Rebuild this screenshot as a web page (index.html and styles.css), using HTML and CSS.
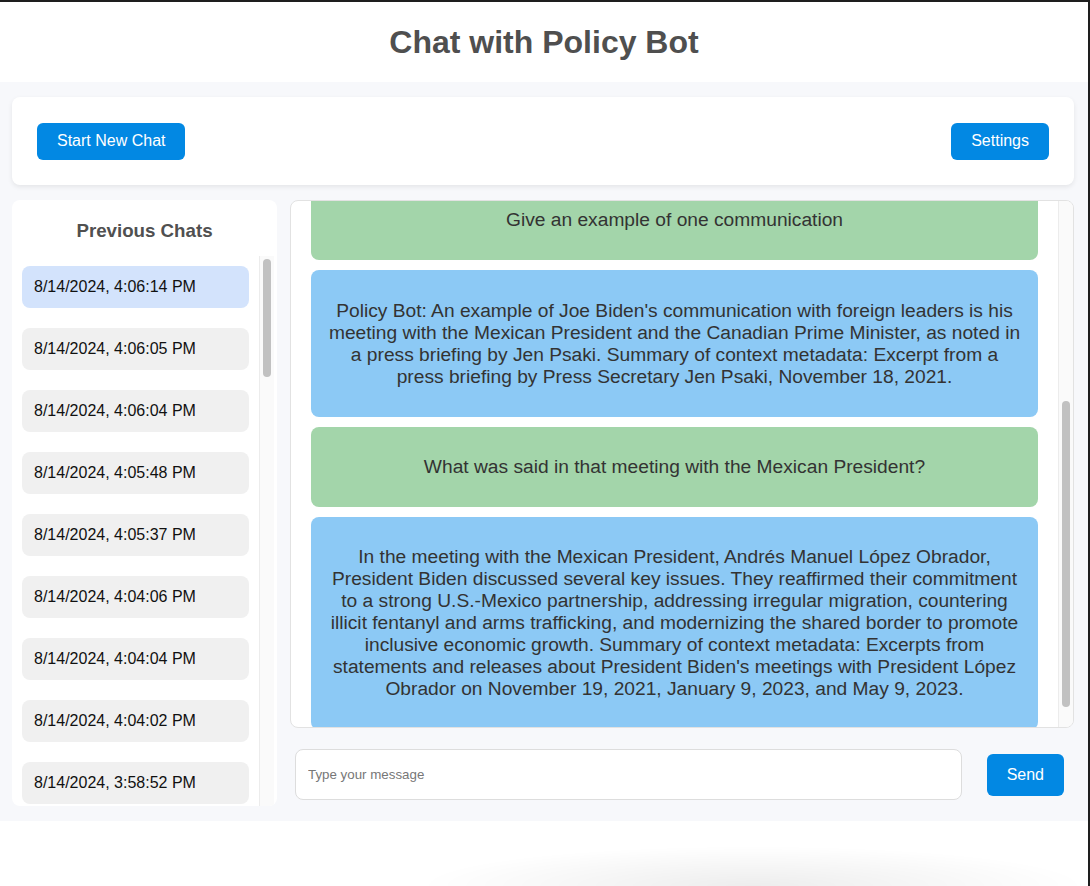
FILE: index.html
```html
<!DOCTYPE html>
<html lang="en">
<head>
<meta charset="utf-8">
<title>Chat with Policy Bot</title>
<link rel="stylesheet" href="styles.css">
</head>
<body>
<div class="frame">
  <header class="app-header">
    <h1 class="app-title">Chat with Policy Bot</h1>
  </header>
  <main class="main">
    <div class="toolbar">
      <button class="btn">Start New Chat</button>
      <button class="btn">Settings</button>
    </div>
    <div class="workspace">
      <aside class="sidebar">
        <h3 class="sidebar-title">Previous Chats</h3>
        <div class="list-wrap">
          <ul class="chat-list">
            <li class="chat-item active">8/14/2024, 4:06:14 PM</li>
            <li class="chat-item">8/14/2024, 4:06:05 PM</li>
            <li class="chat-item">8/14/2024, 4:06:04 PM</li>
            <li class="chat-item">8/14/2024, 4:05:48 PM</li>
            <li class="chat-item">8/14/2024, 4:05:37 PM</li>
            <li class="chat-item">8/14/2024, 4:04:06 PM</li>
            <li class="chat-item">8/14/2024, 4:04:04 PM</li>
            <li class="chat-item">8/14/2024, 4:04:02 PM</li>
            <li class="chat-item">8/14/2024, 3:58:52 PM</li>
          </ul>
          <div class="scrollbar" aria-hidden="true"><div class="thumb thumb-list"></div></div>
        </div>
      </aside>
      <section class="chat">
        <div class="chat-panel">
          <div class="messages" id="messages">
            <div class="msg user"><p>Give an example of one communication</p></div>
            <div class="msg bot"><p>Policy Bot: An example of Joe Biden's communication with foreign leaders is his meeting with the Mexican President and the Canadian Prime Minister, as noted in a press briefing by Jen Psaki. Summary of context metadata: Excerpt from a press briefing by Press Secretary Jen Psaki, November 18, 2021.</p></div>
            <div class="msg user"><p>What was said in that meeting with the Mexican President?</p></div>
            <div class="msg bot"><p>In the meeting with the Mexican President, Andrés Manuel López Obrador, President Biden discussed several key issues. They reaffirmed their commitment to a strong U.S.-Mexico partnership, addressing irregular migration, countering illicit fentanyl and arms trafficking, and modernizing the shared border to promote inclusive economic growth. Summary of context metadata: Excerpts from statements and releases about President Biden's meetings with President López Obrador on November 19, 2021, January 9, 2023, and May 9, 2023.</p></div>
          </div>
          <div class="scrollbar" aria-hidden="true"><div class="thumb thumb-chat"></div></div>
        </div>
        <div class="composer">
          <input class="composer-input" type="text" placeholder="Type your message">
          <button class="btn btn-send">Send</button>
        </div>
      </section>
    </div>
  </main>
</div>
<div class="window-shadow"></div>
<script src="script.js"></script>
</body>
</html>
```

FILE: styles.css
```css
* { box-sizing: border-box; }

html, body {
  margin: 0;
  padding: 0;
  height: 100%;
  background: #ffffff;
}

body {
  font-family: "Liberation Sans", Arial, Helvetica, sans-serif;
  overflow: hidden;
}

.frame {
  border-top: 2px solid #1e1e1e;
  border-right: 2px solid #1e1e1e;
  height: 100%;
}

.app-header {
  height: 80px;
  display: flex;
  align-items: center;
  justify-content: center;
  background: #ffffff;
}

.app-title {
  margin: 0;
  font-size: 32px;
  font-weight: bold;
  color: #4f4f4f;
}

.main {
  background: #f7f8fb;
  padding: 15px 14px 15px 12px;
}

.toolbar {
  height: 88px;
  padding: 0 25px;
  background: #ffffff;
  border-radius: 8px;
  box-shadow: 0 2px 5px rgba(0, 0, 0, 0.08);
  display: flex;
  align-items: center;
  justify-content: space-between;
}

.btn {
  font-family: "Liberation Sans", Arial, Helvetica, sans-serif;
  font-size: 16px;
  color: #ffffff;
  background: #0288e3;
  border: none;
  border-radius: 6px;
  height: 37px;
  padding: 0 20px;
  cursor: pointer;
}

.workspace {
  margin-top: 15px;
  height: 606px;
  display: grid;
  grid-template-columns: 265px 1fr;
  column-gap: 13px;
}

.sidebar {
  background: #ffffff;
  border-radius: 8px;
  display: flex;
  flex-direction: column;
  overflow: hidden;
}

.sidebar-title {
  margin: 20px 0 14px;
  font-size: 18.72px;
  font-weight: bold;
  color: #505050;
  text-align: center;
}

.list-wrap {
  position: relative;
  flex: 1;
  min-height: 0;
  margin: 0 3px 0 10px;
}

.chat-list {
  list-style: none;
  height: 100%;
  margin: 0;
  padding: 10px 25px 0 0;
  overflow: hidden;
}

.chat-item {
  height: 42px;
  padding: 0 12px;
  margin-bottom: 20px;
  display: flex;
  align-items: center;
  font-size: 16px;
  color: #111111;
  background: #f0f0f0;
  border-radius: 8px;
}

.chat-item.active {
  background: #d3e3fc;
}

/* drawn scrollbar (overlay on the scroll area's right edge) */
.scrollbar {
  position: absolute;
  top: 0;
  right: 0;
  bottom: 0;
  width: 15px;
  background: #fafafa;
  border-left: 1px solid #ececec;
}

.thumb {
  position: absolute;
  left: 3px;
  width: 8px;
  background: #c1c1c1;
  border-radius: 4px;
}

.thumb-list {
  top: 3px;
  height: 118px;
}

.thumb-chat {
  top: 200px;
  height: 306px;
}

.chat {
  display: flex;
  flex-direction: column;
  min-width: 0;
}

.chat-panel {
  position: relative;
  height: 528px;
  background: #ffffff;
  border: 1px solid #e2e2e2;
  border-radius: 8px;
  overflow: hidden;
}

.messages {
  height: 100%;
  overflow-y: scroll;
  padding: 0 35px 0 20px;
}

.msg {
  border-radius: 8px;
  padding: 10px 14.75px;
  margin-bottom: 10px;
  text-align: center;
  color: #333333;
  font-size: 19.2px;
}

.msg:last-child {
  margin-bottom: 0;
}

.msg p {
  margin: 19.2px 0;
}

.msg.user {
  background: #a3d5aa;
}

.msg.bot {
  background: #8cc9f5;
}

.composer {
  flex: 1;
  display: flex;
  align-items: center;
  gap: 25px;
  padding: 15px 10px 0 5px;
}

.composer-input {
  flex: 1;
  height: 51px;
  padding: 0 12px;
  border: 1px solid #dddddd;
  border-radius: 8px;
  background: #ffffff;
  font-family: "Liberation Sans", Arial, Helvetica, sans-serif;
  font-size: 13.33px;
  color: #333333;
}

.composer-input::placeholder {
  color: #777777;
}

.btn-send {
  height: 42px;
}

.window-shadow {
  position: fixed;
  left: 420px;
  right: 4px;
  bottom: 0;
  height: 40px;
  background: radial-gradient(ellipse 50% 100% at 50% 100%, rgba(0, 0, 0, 0.07), rgba(0, 0, 0, 0) 100%);
  pointer-events: none;
}
```

FILE: script.js
```js
var messages = document.getElementById('messages');
if (messages) {
  messages.scrollTop = messages.scrollHeight - messages.clientHeight - 3;
}
```
